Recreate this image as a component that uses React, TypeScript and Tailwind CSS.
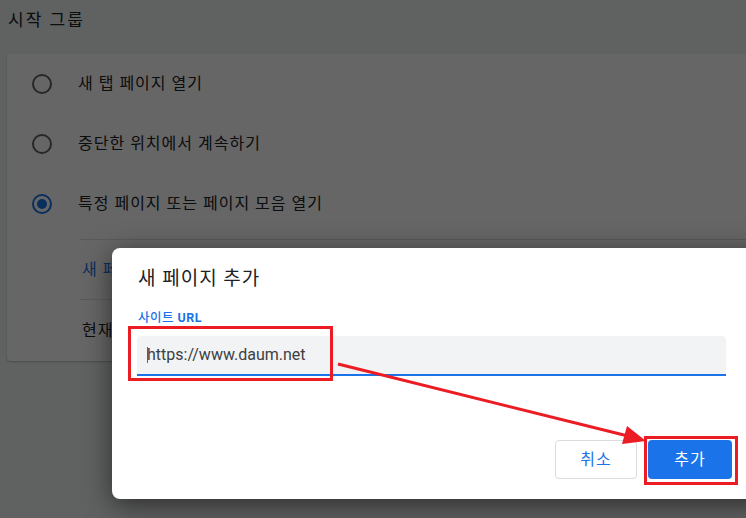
import React from 'react';

const font = { fontFamily: "Roboto, 'Noto Sans CJK KR', sans-serif" };

function Radio({ checked }: { checked?: boolean }) {
  return (
    <span
      className={`flex h-5 w-5 shrink-0 items-center justify-center rounded-full border-2 ${
        checked ? 'border-[#1a73e8]' : 'border-[#5f6368]'
      }`}
    >
      {checked && <span className="h-[10px] w-[10px] rounded-full bg-[#1a73e8]" />}
    </span>
  );
}

function Option({ label, checked }: { label: string; checked?: boolean }) {
  return (
    <div className="flex h-[60px] items-center pl-[25px]">
      <Radio checked={checked} />
      <span className="ml-[26px] text-[16px] tracking-[1px] text-[#202124]">{label}</span>
    </div>
  );
}

// red annotation marks drawn over the screenshot
function Annotations() {
  return (
    <svg className="pointer-events-none absolute inset-0" width="746" height="518">
      <rect x="129.5" y="327.5" width="202" height="52" fill="none" stroke="#ec1c24" strokeWidth="3" />
      <rect x="645.5" y="437.5" width="91" height="46" fill="none" stroke="#ec1c24" strokeWidth="3" />
      <line x1="338" y1="364" x2="628" y2="436" stroke="#ec1c24" strokeWidth="3" />
      <polygon points="646,441 627,426 622,444" fill="#ec1c24" />
    </svg>
  );
}

export default function App() {
  return (
    <div className="relative h-[518px] w-[746px] overflow-hidden bg-[#eff4f2]" style={font}>
      {/* settings page behind the dialog */}
      <div className="pl-[7px]">
        <div className="flex h-[42px] items-center pl-px text-[17px] tracking-[2px] text-[#202124]">시작 그룹</div>
        <div className="mt-3 w-[780px] rounded-[4px] bg-white shadow-[0_1px_2px_rgba(60,64,67,0.3)]">
          <Option label="새 탭 페이지 열기" />
          <Option label="중단한 위치에서 계속하기" />
          <Option label="특정 페이지 또는 페이지 모음 열기" checked />
          <div className="ml-[73px] mt-[5px]">
            <div className="flex h-[60px] items-center border-t border-[#e0e0e0] pl-[2px] text-[16px] tracking-[1px] text-[#1a73e8]">
              새 페이지 추가
            </div>
            <div className="flex h-[62px] items-center border-t border-[#e0e0e0] pl-[2px] text-[16px] tracking-[1px] text-[#202124]">
              현재 페이지 사용
            </div>
          </div>
        </div>
      </div>

      <div className="absolute inset-0 bg-black/60" />

      {/* dialog */}
      <div className="absolute left-[112px] top-[248px] h-[251px] w-[660px] rounded-[8px] bg-white shadow-[0_6px_28px_rgba(0,0,0,0.55)]">
        <div className="pl-[26px] pt-[18px] text-[19px] leading-[26px] tracking-[1px] text-[#202124]">새 페이지 추가</div>
        <div className="mt-[18px] pl-[26px] text-[12.5px] font-medium leading-[16px] tracking-[0.5px] text-[#1a73e8]">
          사이트 <span className="font-bold">URL</span>
        </div>
        <div className="ml-[25px] mt-[10px] flex h-[40px] w-[589px] items-center rounded-t-[4px] border-b-2 border-[#1a73e8] bg-[#f1f3f4] pl-[10px] text-[16px] text-[#3c4043]">
          <span className="mr-[-1px] inline-block h-[16px] w-px bg-[#1a73e8]" />
          https://www.daum.net
        </div>
        <div className="mt-[64px] flex gap-[11px] pl-[443px]">
          <button className="h-[39px] w-[82px] rounded-[4px] border border-[#dadce0] bg-white text-[16px] tracking-[1px] text-[#1a73e8]">
            취소
          </button>
          <button className="h-[39px] w-[84px] rounded-[4px] bg-[#1a73e8] text-[16px] tracking-[1px] text-white">
            추가
          </button>
        </div>
      </div>

      <Annotations />
    </div>
  );
}
